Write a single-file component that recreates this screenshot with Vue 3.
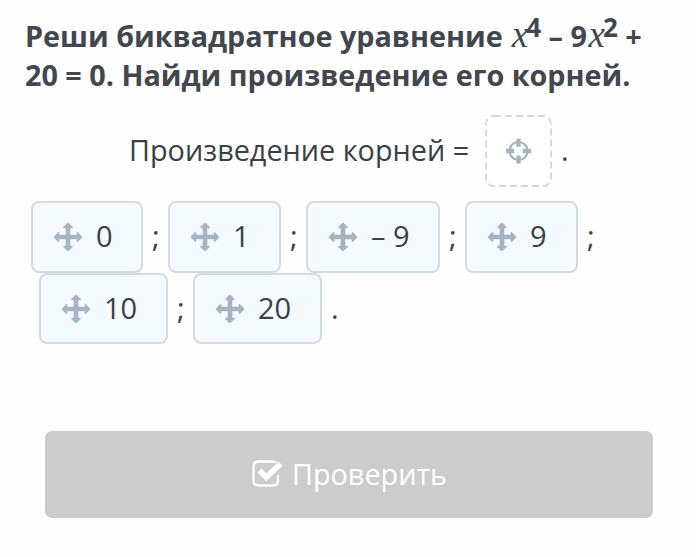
<script setup>
const rows = [
  [
    { label: '0', width: 112, after: ';' },
    { label: '1', width: 113, after: ';' },
    { label: '– 9', width: 134, after: ';' },
    { label: '9', width: 113, after: ';' },
  ],
  [
    { label: '10', width: 129, after: ';' },
    { label: '20', width: 129, after: '.' },
  ],
]
</script>

<template>
  <main class="task">
    <h1 class="question">
      <span class="line first">Реши биквадратное уравнение <i class="var">x</i><sup>4</sup> – 9<i class="var">x</i><sup>2</sup> +</span>
      <span class="line second">20 = 0. Найди произведение его корней.</span>
    </h1>

    <div class="answer">
      <span class="answer-label">Произведение корней =</span>
      <svg class="slot" width="68" height="73" viewBox="0 0 68 73">
        <rect x="1" y="1" width="65" height="70" rx="8" fill="#fff" stroke="#d3d7da" stroke-width="1.8" stroke-dasharray="7 4" />
        <g fill="none" stroke="#a4b4c1">
          <circle cx="33.5" cy="36" r="9" stroke-width="2.2" />
          <path d="M33.5 23.800v8M33.5 40.500v8M21 36h8.2M37.8 36h8.4" stroke-width="4.3" />
        </g>
      </svg>
      <span class="dot">.</span>
    </div>

    <div class="options">
      <div v-for="(row, r) in rows" :key="r" class="row" :class="{ indent: r === 1 }">
        <template v-for="item in row" :key="item.label">
          <button class="chip" :style="{ width: item.width + 'px' }">
            <svg class="move" width="30" height="30" viewBox="0 0 30 30">
              <path d="M15 1.4l4.2 4.2h-2.6v7.8h7.8v-2.6L28.6 15l-4.2 4.2v-2.6h-7.8v7.8h2.6L15 28.6l-4.2-4.2h2.6v-7.8H5.6v2.6L1.4 15l4.2-4.2v2.6h7.8V5.6h-2.6z" fill="#a4b4c1" stroke="#a4b4c1" stroke-width="1.4" stroke-linejoin="round" />
            </svg>
            <span class="label">{{ item.label }}</span>
          </button>
          <span class="sep">{{ item.after }}</span>
        </template>
      </div>
    </div>

    <button class="check">
      <svg width="32" height="28" viewBox="0 0 32 28">
        <path d="M24.5 2Q23.6 1.5 22 1.5H7.5Q2.5 1.5 2.5 6.5v14q0 5 5 5h14.5q5 0 5-5V16" fill="none" stroke="#fff" stroke-width="2.3" stroke-linecap="round" />
        <path d="M8.500 10.500l6.800 6.800L29.500 3.800" fill="none" stroke="#fff" stroke-width="5.600" stroke-linejoin="miter" />
      </svg>
      <span>Проверить</span>
    </button>
  </main>
</template>

<style>
body {
  background: #fff;
}
</style>

<style scoped>
.task {
  box-sizing: border-box;
  width: 696px;
  height: 557px;
  padding-top: 16px;
  background: #fefefe;
  color: #3b4045;
  font-family: "Open Sans", "Noto Sans", sans-serif;
  font-size: 29px;
  overflow: hidden;
}
.question {
  margin: 0;
  padding-left: 25px;
  font-size: 28.78px;
  font-weight: 700;
  line-height: 39px;
  color: #41464f;
}
.line {
  display: block;
  height: 39px;
  white-space: nowrap;
}
.var {
  display: inline-block;
  box-sizing: border-box;
  width: 16px;
  padding-left: 1.5px;
  font-family: "Liberation Serif", serif;
  font-weight: 400;
  font-size: 37px;
  line-height: 1;
}
sup {
  font-size: 26px;
  line-height: 0;
  vertical-align: 10px;
}
.answer {
  display: flex;
  align-items: center;
  height: 73px;
  margin-top: 21px;
  padding-left: 129px;
  white-space: nowrap;
}
.answer-label {
  width: 356px;
  padding-bottom: 4px;
  font-size: 28.8px;
}
.slot {
  flex: none;
}
.dot {
  margin-left: 8px;
  padding-bottom: 4px;
}
.options {
  margin-top: 13px;
  padding-left: 31px;
}
.row {
  display: flex;
  align-items: center;
  height: 72px;
}
.row.indent {
  height: 71px;
  padding-left: 8px;
}
.chip {
  box-sizing: border-box;
  flex: none;
  display: flex;
  align-items: center;
  gap: 13px;
  height: 100%;
  padding: 0 0 0 20px;
  border: 2px solid #d4dbdf;
  border-radius: 8px;
  background: #f4faff;
  color: inherit;
  font: inherit;
  white-space: nowrap;
}
.label {
  padding-bottom: 3px;
}
.move {
  flex: none;
}
.sep {
  width: 16px;
  padding: 0 0 3px 9px;
}
.check {
  display: flex;
  align-items: center;
  justify-content: center;
  gap: 9px;
  width: 608px;
  height: 87px;
  margin: 87px 0 0 45px;
  padding: 0 0 2px;
  border: 0;
  border-radius: 7px;
  background: #ccc;
  color: #fff;
  font: inherit;
  font-size: 28.8px;
}
</style>
